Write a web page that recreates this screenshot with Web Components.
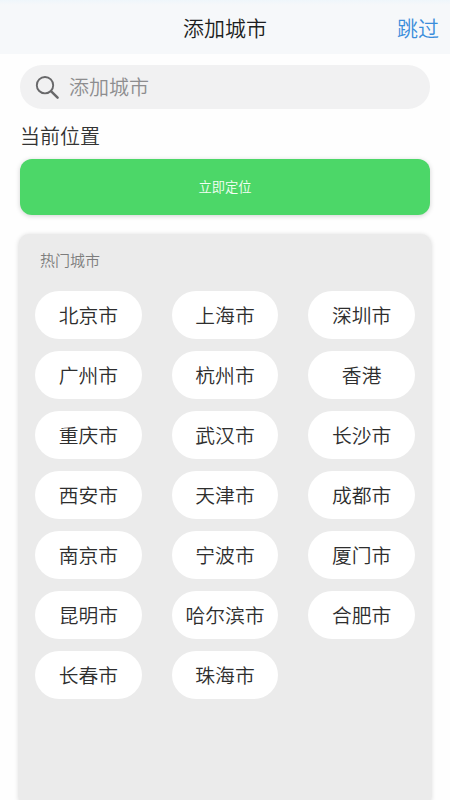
<!DOCTYPE html>
<html lang="zh-CN">
<head>
<meta charset="utf-8">
<title>添加城市</title>
<style>
html,body{margin:0;height:100%;overflow:hidden;background:#fefefe}
body{font-family:"Noto Sans CJK SC",sans-serif;font-weight:350;color:#2e2e2e}
</style>
</head>
<body>
<city-page></city-page>
<script>
const define = (name, html) => customElements.define(name, class extends HTMLElement {
  constructor() {
    super();
    this.attachShadow({ mode: 'open' }).innerHTML = html;
  }
});

define('nav-bar', `<style>
:host{display:grid;grid-template-columns:1fr auto 1fr;align-items:center;height:54px;box-sizing:border-box;padding:0 11px;background:linear-gradient(#eff6fb,#f6f8fa 5px);font-size:21px;line-height:30px;color:#1c1e21}
.title{grid-column:2}
.action{justify-self:end;color:#3a8ddb}
</style><span class="title"><slot></slot></span><span class="action"><slot name="action"></slot></span>`);

define('search-field', `<style>
:host{display:flex;align-items:center;gap:9px;height:44px;box-sizing:border-box;padding-left:15px;border-radius:22px;background:#f1f1f2;color:#8d8d8f;font-size:20px;line-height:30px}
svg{display:block;width:25px;height:25px}
</style><svg viewBox="0 0 25 25" fill="none" stroke="#68686a"><circle cx="10" cy="10.2" r="8.2" stroke-width="1.9"/><path d="M16.2 16.4L22.6 22.6" stroke-width="2.5" stroke-linecap="round"/></svg><span><slot></slot></span>`);

define('locate-button', `<style>
:host{display:flex;align-items:center;justify-content:center;height:56px;border-radius:12px;background:#4cd768;box-shadow:0 1px 5px rgba(0,0,0,.18);color:#f4fff5;font-size:13.3px;line-height:20px}
</style><span><slot></slot></span>`);

define('city-pill', `<style>
:host{display:flex;align-items:center;justify-content:center;height:48px;border-radius:24px;background:#fff;font-size:19.8px;line-height:30px;white-space:nowrap}
</style><span><slot></slot></span>`);

define('city-panel', `<style>
:host{display:block;flex:1;box-sizing:border-box;padding:15px 16px 0 16px;border-radius:10px 10px 0 0;background:#ebebeb;box-shadow:0 1px 5px rgba(0,0,0,.18)}
.label{padding-left:5px;font-size:15px;line-height:22px;color:#7c7c7c}
.grid{display:grid;grid-template-columns:repeat(3,1fr);gap:12px 30px;margin-top:20px}
</style><div class="label"><slot name="label"></slot></div><div class="grid"><slot></slot></div>`);

const cities = ['北京市','上海市','深圳市','广州市','杭州市','香港','重庆市','武汉市','长沙市','西安市','天津市','成都市','南京市','宁波市','厦门市','昆明市','哈尔滨市','合肥市','长春市','珠海市'];

define('city-page', `<style>
:host{display:flex;flex-direction:column;height:100vh;overflow:hidden}
main{display:flex;flex-direction:column;flex:1;padding:11px 20px 0}
h2{margin:12px 0 8px;font-size:20px;line-height:30px;font-weight:inherit;color:#333}
city-panel{margin:19px -1px 0}
</style><nav-bar>添加城市<span slot="action">跳过</span></nav-bar>
<main><search-field>添加城市</search-field><h2>当前位置</h2>
<locate-button>立即定位</locate-button>
<city-panel><span slot="label">热门城市</span>${cities.map(c => `<city-pill>${c}</city-pill>`).join('')}</city-panel></main>`);
</script>
</body>
</html>
